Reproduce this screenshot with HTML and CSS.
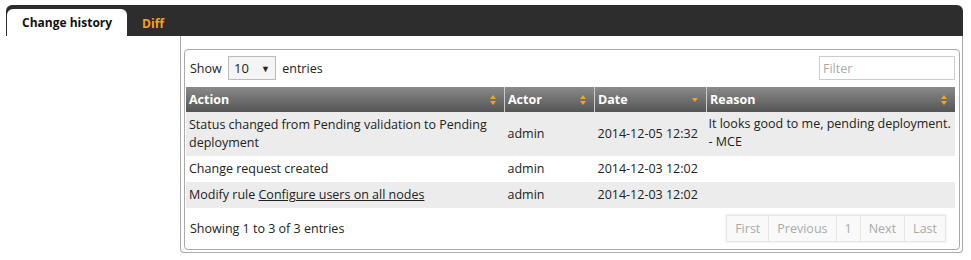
FILE: index.html
```html
<!DOCTYPE html>
<html lang="en">
<head>
  <meta charset="UTF-8" />
  <title>Change request</title>
  <link rel="stylesheet" href="styles.css">
</head>
<body>

  <div class="tabs">
    <a class="tab active">Change history</a>
    <a class="tab">Diff</a>
  </div>

  <div class="panel">
    <div class="box">
      <div class="toolbar">
        <label class="length">Show
          <span class="select">10 <span class="caret">&#9660;</span></span>
          entries</label>
        <input class="filter" type="text" placeholder="Filter">
      </div>

      <table class="history">
        <thead>
          <tr>
            <th class="col-action">Action <span class="sort both"></span></th>
            <th class="col-actor">Actor <span class="sort both"></span></th>
            <th class="col-date">Date <span class="sort desc"></span></th>
            <th class="col-reason">Reason <span class="sort both"></span></th>
          </tr>
        </thead>
        <tbody>
          <tr class="odd">
            <td>Status changed from Pending validation to Pending deployment</td>
            <td>admin</td>
            <td>2014-12-05 12:32</td>
            <td class="top">It looks good to me, pending deployment. - MCE</td>
          </tr>
          <tr>
            <td>Change request created</td>
            <td>admin</td>
            <td>2014-12-03 12:02</td>
            <td></td>
          </tr>
          <tr class="odd">
            <td>Modify rule <a href="#">Configure users on all nodes</a></td>
            <td>admin</td>
            <td>2014-12-03 12:02</td>
            <td></td>
          </tr>
        </tbody>
      </table>

      <div class="footer">
        <div class="info">Showing 1 to 3 of 3 entries</div>
        <div class="paging">
          <span class="page">First</span><span class="page">Previous</span><span class="page">1</span><span class="page">Next</span><span class="page">Last</span>
        </div>
      </div>
    </div>
  </div>

</body>
</html>
```

FILE: styles.css
```css
body {
  margin: 0;
  padding: 5px 8px 0 6px;
  font-family: "Open Sans", sans-serif;
  font-size: 12.5px;
  color: #222;
  background-color: #fff;
}

.tabs {
  display: flex;
  align-items: flex-end;
  height: 31px;
  background-color: #2d2d2d;
  border-radius: 6px 6px 0 0;
  padding-left: 1px;
}

.tab {
  font-weight: bold;
  font-size: 12px;
  color: #f7a21b;
  padding: 5px 15px 4px 15px;
}

.tab.active {
  background-color: #fff;
  color: #111;
  border-radius: 6px 6px 0 0;
  height: 18px;
}

.panel {
  margin-left: 174px;
  border: 1px solid #aaa;
  border-top: none;
  border-radius: 0 0 4px 4px;
  padding: 13px 2px 2px 3px;
}

.box {
  border: 1px solid #aaa;
  border-radius: 4px;
  padding: 6px 4px 0 1px;
}

.toolbar {
  display: flex;
  justify-content: space-between;
  align-items: center;
  height: 24px;
  padding-left: 4px;
  margin-bottom: 7px;
}

.select {
  display: inline-flex;
  justify-content: space-between;
  align-items: center;
  box-sizing: border-box;
  width: 48px;
  height: 24px;
  margin: 0 3px;
  padding: 0 5px;
  border: 1px solid #bbb;
  background-color: #f4f4f4;
  font-size: 13px;
}

.caret {
  font-size: 9px;
}

.filter {
  box-sizing: border-box;
  width: 136px;
  height: 24px;
  border: 1px solid #ccc;
  padding: 0 3px;
  font-family: inherit;
  font-size: 12.5px;
}

.filter::placeholder {
  color: #aaa;
}

.history {
  width: 100%;
  border-collapse: collapse;
}

.history th {
  height: 25px;
  padding: 0 3px;
  text-align: left;
  color: #fff;
  font-size: 12.5px;
  background: linear-gradient(#8a8a8a, #555);
  border-left: 1px solid #ccc;
  position: relative;
}

.history th:first-child {
  border-left: none;
}

.col-action { width: 312px; }
.col-actor { width: 83px; }
.col-date { width: 105px; }

.sort {
  position: absolute;
  right: 7px;
  top: 8px;
  width: 7px;
  height: 10px;
}

.sort.both::before,
.sort.both::after,
.sort.desc::after {
  content: "";
  position: absolute;
  left: 0;
  border-left: 3.5px solid transparent;
  border-right: 3.5px solid transparent;
}

.sort.both::before {
  top: 0;
  border-bottom: 4px solid #f7a21b;
}

.sort.both::after {
  top: 6px;
  border-top: 4px solid #f7a21b;
}

.sort.desc::after {
  top: 3px;
  border-top: 4px solid #f7a21b;
}

.history td {
  height: 18px;
  padding: 4px 3px;
  vertical-align: middle;
  line-height: 18px;
}

.history td.top {
  vertical-align: top;
  padding: 3px 0 4px 2px;
}

.history tr.odd td {
  background-color: #ececec;
}

.history a {
  color: #222;
}

.footer {
  display: flex;
  justify-content: space-between;
  align-items: center;
  height: 41px;
  padding: 0 9px 0 4px;
}

.paging {
  display: flex;
  box-shadow: 0 0 2px #ddd;
}

.page {
  padding: 4px 8px;
  color: #aaa;
  border: 1px solid #e6e6e6;
  border-left: none;
  background-color: #f9f9f9;
}

.page:first-child {
  border-left: 1px solid #e6e6e6;
}
```
